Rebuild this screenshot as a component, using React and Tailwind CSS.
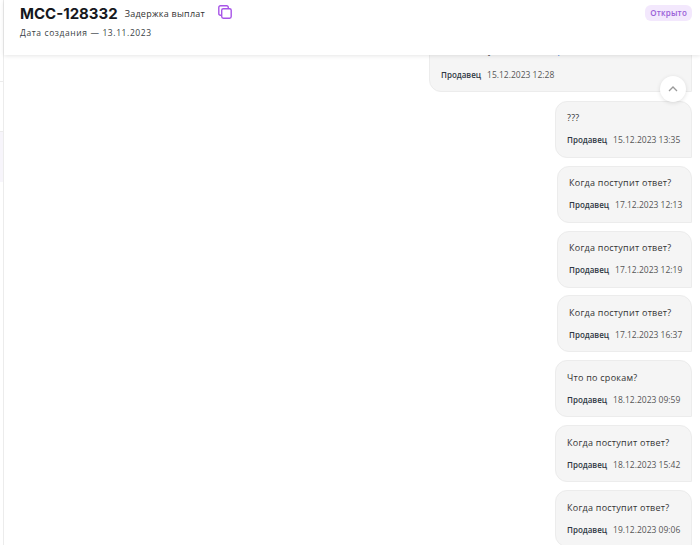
const font = { fontFamily: '"Open Sans", "Noto Sans", sans-serif' };

function Meta({ date }) {
  return (
    <p className="flex h-[12px] items-center gap-[6px] leading-[12px] whitespace-nowrap">
      <span className="text-[8px] font-semibold text-[#2f3843]">Продавец</span>
      <span className="text-[8.5px] text-[#555]">{date}</span>
    </p>
  );
}

function Bubble({ text, date, className = "" }) {
  return (
    <div className={`h-[57px] shrink-0 rounded-t-[12px] rounded-bl-[12px] border border-[#ececec] bg-[#f5f5f5] pl-[11px] ${className}`}>
      <p className="mb-[9px] h-[14px] text-[9px] leading-[14px] tracking-[0.25px] text-[#333]">{text}</p>
      <Meta date={date} />
    </div>
  );
}

const messages = [
  { text: "???", date: "15.12.2023 13:35", cls: "mt-[9px] w-[137px] pt-[9px]" },
  { text: "Когда поступит ответ?", date: "17.12.2023 12:13", cls: "mt-[8px] w-[135px] pt-[9px]" },
  { text: "Когда поступит ответ?", date: "17.12.2023 12:19", cls: "mt-[8px] w-[135px] pt-[9px]" },
  { text: "Когда поступит ответ?", date: "17.12.2023 16:37", cls: "mt-[7px] w-[135px] pt-[10px]" },
  { text: "Что по срокам?", date: "18.12.2023 09:59", cls: "mt-[8px] w-[137px] pt-[10px]" },
  { text: "Когда поступит ответ?", date: "18.12.2023 15:42", cls: "mt-[8px] w-[137px] pt-[10px]" },
  { text: "Когда поступит ответ?", date: "19.12.2023 09:06", cls: "mt-[8px] w-[137px] pt-[10px]" },
];

export default function App() {
  return (
    <div className="flex h-[545px] w-[700px] overflow-hidden bg-white" style={font}>
      <aside className="flex w-[4px] shrink-0 flex-col border-r border-[#ececec]">
        <div className="h-[82px] border-b border-[#ececec]" />
        <div className="h-[50px] border-b border-[#ececec]" />
        <div className="h-[50px] bg-[#f7f5fb]" />
      </aside>
      <main className="relative flex min-w-0 flex-1 flex-col">
        <header className="relative z-10 flex h-[55px] shrink-0 justify-between bg-white pr-[8px] pl-[16px] shadow-[0_1px_4px_rgba(0,0,0,0.1)]">
          <div>
            <div className="flex h-[27px] items-center">
              <h1 className="text-[15px] leading-[20px] font-bold text-[#15181d]" style={{ fontFamily: "Inter, sans-serif" }}>МСС-128332</h1>
              <span className="ml-[7px] text-[9px] tracking-[0.25px] text-[#333]">Задержка выплат</span>
              <svg className="mt-[-4px] ml-[13px]" width="14" height="14" viewBox="0 0 14 14" fill="none" stroke="#a855e8" strokeWidth="1.4">
                <path d="M10.3 3.6V2.4A1.6 1.6 0 0 0 8.7.8H2.4A1.6 1.6 0 0 0 .8 2.4v6.3a1.6 1.6 0 0 0 1.6 1.6h1.2" />
                <rect x="3.7" y="3.7" width="9.5" height="9.5" rx="1.6" />
              </svg>
            </div>
            <p className="text-[8.5px] leading-[12px] tracking-[0.6px] text-[#3a3f46]">Дата создания — 13.11.2023</p>
          </div>
          <span className="mt-[5px] flex h-[16px] items-center rounded-[6px] bg-[#f3e8fd] px-[5px] text-[8px] font-semibold tracking-[0.2px] text-[#9a5fd8]">Открыто</span>
        </header>
        <section className="flex min-h-0 flex-1 flex-col items-end overflow-hidden pr-[8px]">
          <div className="mt-[-22px] h-[59px] w-[263px] shrink-0 rounded-bl-[12px] border border-[#ececec] bg-[#f5f5f5] pt-[10px] pl-[11px]">
            <p className="flex h-[14px] gap-[65px] pl-[47px] text-[9px] leading-[14px] text-[#333]">
              <span>у</span><span className="text-[#2b7de0]">р</span>
            </p>
            <div className="mt-[11px]"><Meta date="15.12.2023 12:28" /></div>
          </div>
          {messages.map((m, i) => (
            <Bubble key={i} text={m.text} date={m.date} className={m.cls} />
          ))}
        </section>
        <button className="absolute top-[76px] right-[14px] z-20 flex h-[26px] w-[26px] items-center justify-center rounded-full bg-white shadow-[0_1px_4px_rgba(0,0,0,0.12)]">
          <svg width="12" height="12" viewBox="0 0 12 12" fill="none" stroke="#9a9a9a" strokeWidth="1.3"><path d="M2 8l4-4 4 4" /></svg>
        </button>
      </main>
    </div>
  );
}
